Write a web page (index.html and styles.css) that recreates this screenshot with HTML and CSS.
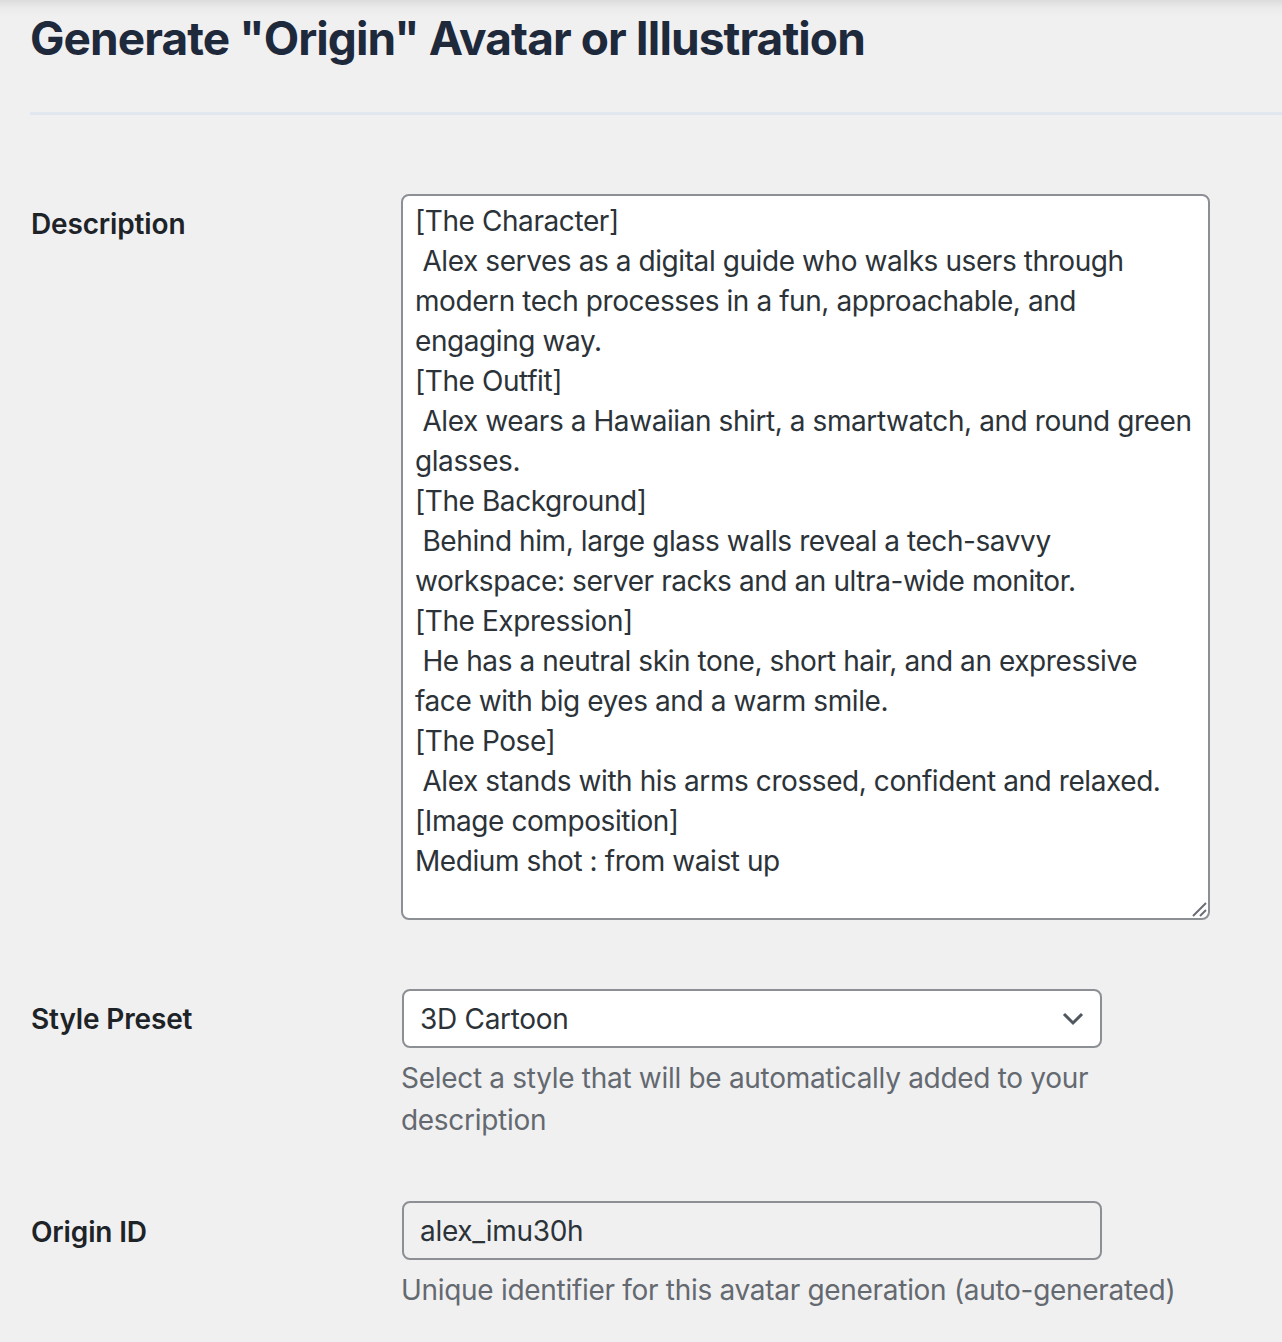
FILE: index.html
```html
<!DOCTYPE html>
<html lang="en">
<head>
<meta charset="utf-8">
<title>Generate "Origin" Avatar or Illustration</title>
<link rel="stylesheet" href="styles.css">
</head>
<body>
<div class="wrap">
  <h1 class="page-title">Generate "Origin" Avatar or Illustration</h1>
  <div class="divider"></div>
  <div class="form">
    <div class="row row-desc">
      <label class="label" for="desc">Description</label>
      <div class="field">
        <div class="textarea-wrap">
          <textarea id="desc" class="textarea" rows="18">[The Character]
 Alex serves as a digital guide who walks users through modern tech processes in a fun, approachable, and engaging way.
[The Outfit]
 Alex wears a Hawaiian shirt, a smartwatch, and round green glasses.
[The Background]
 Behind him, large glass walls reveal a tech-savvy workspace: server racks and an ultra-wide monitor.
[The Expression]
 He has a neutral skin tone, short hair, and an expressive face with big eyes and a warm smile.
[The Pose]
 Alex stands with his arms crossed, confident and relaxed.
[Image composition]
Medium shot : from waist up</textarea>
          <svg class="grip" width="18" height="18" viewBox="0 0 18 18" aria-hidden="true">
            <path d="M3 16 L16 3 M10 16 L16 10" stroke="#6b6f75" stroke-width="2" fill="none"/>
          </svg>
        </div>
      </div>
    </div>
    <div class="row row-select">
      <label class="label" for="style">Style Preset</label>
      <div class="field">
        <div class="select" id="style">
          <span class="select-value">3D Cartoon</span>
          <svg class="chev" width="22" height="14" viewBox="0 0 22 14" aria-hidden="true">
            <path d="M2 2 L11 11 L20 2" stroke="#50575e" stroke-width="3" fill="none"/>
          </svg>
        </div>
        <p class="help">Select a style that will be automatically added to your description</p>
      </div>
    </div>
    <div class="row row-input">
      <label class="label" for="oid">Origin ID</label>
      <div class="field">
        <div class="input" id="oid">alex_imu30h</div>
        <p class="help">Unique identifier for this avatar generation (auto-generated)</p>
      </div>
    </div>
  </div>
</div>
</body>
</html>
```
FILE: styles.css
```css
html, body {
  margin: 0;
  padding: 0;
  background: #f0f0f1;
}
body {
  font-family: Inter, "Noto Sans", "Liberation Sans", sans-serif;
  color: #1d2327;
  min-height: 1342px;
  background: linear-gradient(#dcdcdd 0, #ebebec 8px, #f0f0f1 18px, #f0f0f1 100%);
}
.wrap {
  padding-left: 29px;
}
.page-title {
  margin: 0;
  padding-top: 10px;
  padding-left: 1px;
  font-size: 46px;
  line-height: 56px;
  font-weight: 700;
  letter-spacing: -0.92px;
  color: #1e293b;
}
.divider {
  margin-top: 46px;
  margin-left: 1px;
  height: 3px;
  background: #e1e7ef;
}
.form {
  padding-top: 79px;
  width: 1190px;
}
.row {
  display: grid;
  grid-template-columns: 372px 815px;
}
.label {
  display: block;
  padding-left: 2px;
  font-size: 28px;
  line-height: 40px;
  font-weight: 600;
  letter-spacing: -0.15px;
  color: #1d2327;
}
.row-desc .label { padding-top: 10px; }
.row-select { margin-top: 69px; }
.row-select .label { padding-top: 10px; }
.row-input { margin-top: 60px; }
.row-input .label { padding-top: 11px; }

.textarea-wrap {
  position: relative;
  width: 809px;
  height: 726px;
}
.textarea {
  box-sizing: border-box;
  width: 809px;
  height: 726px;
  display: block;
  margin: 0;
  padding: 5px 12px;
  border: 2px solid #8c8f94;
  border-radius: 8px;
  background: #fff;
  font-family: Inter, "Noto Sans", sans-serif;
  font-size: 28px;
  line-height: 40px;
  color: #2c3338;
  resize: none;
  overflow: hidden;
  letter-spacing: -0.42px;
}
.grip {
  position: absolute;
  right: 2px;
  bottom: 2px;
}
.select {
  box-sizing: border-box;
  width: 700px;
  height: 59px;
  margin-left: 1px;
  border: 2px solid #8c8f94;
  border-radius: 8px;
  background: #fff;
  display: flex;
  align-items: center;
  justify-content: space-between;
  padding: 0 16px 0 16px;
  font-size: 28px;
  color: #2c3338;
  letter-spacing: -0.3px;
}
.chev { display: block; }
.input {
  box-sizing: border-box;
  width: 700px;
  height: 59px;
  margin-left: 1px;
  border: 2px solid #8c8f94;
  border-radius: 8px;
  background: #f0f0f1;
  display: flex;
  align-items: center;
  padding: 0 16px;
  font-size: 28px;
  color: #2c3338;
  letter-spacing: -0.3px;
}
.help {
  margin: 9px 0 0;
  font-size: 28px;
  line-height: 42px;
  color: #646970;
  letter-spacing: -0.3px;
  max-width: 815px;
}
```
